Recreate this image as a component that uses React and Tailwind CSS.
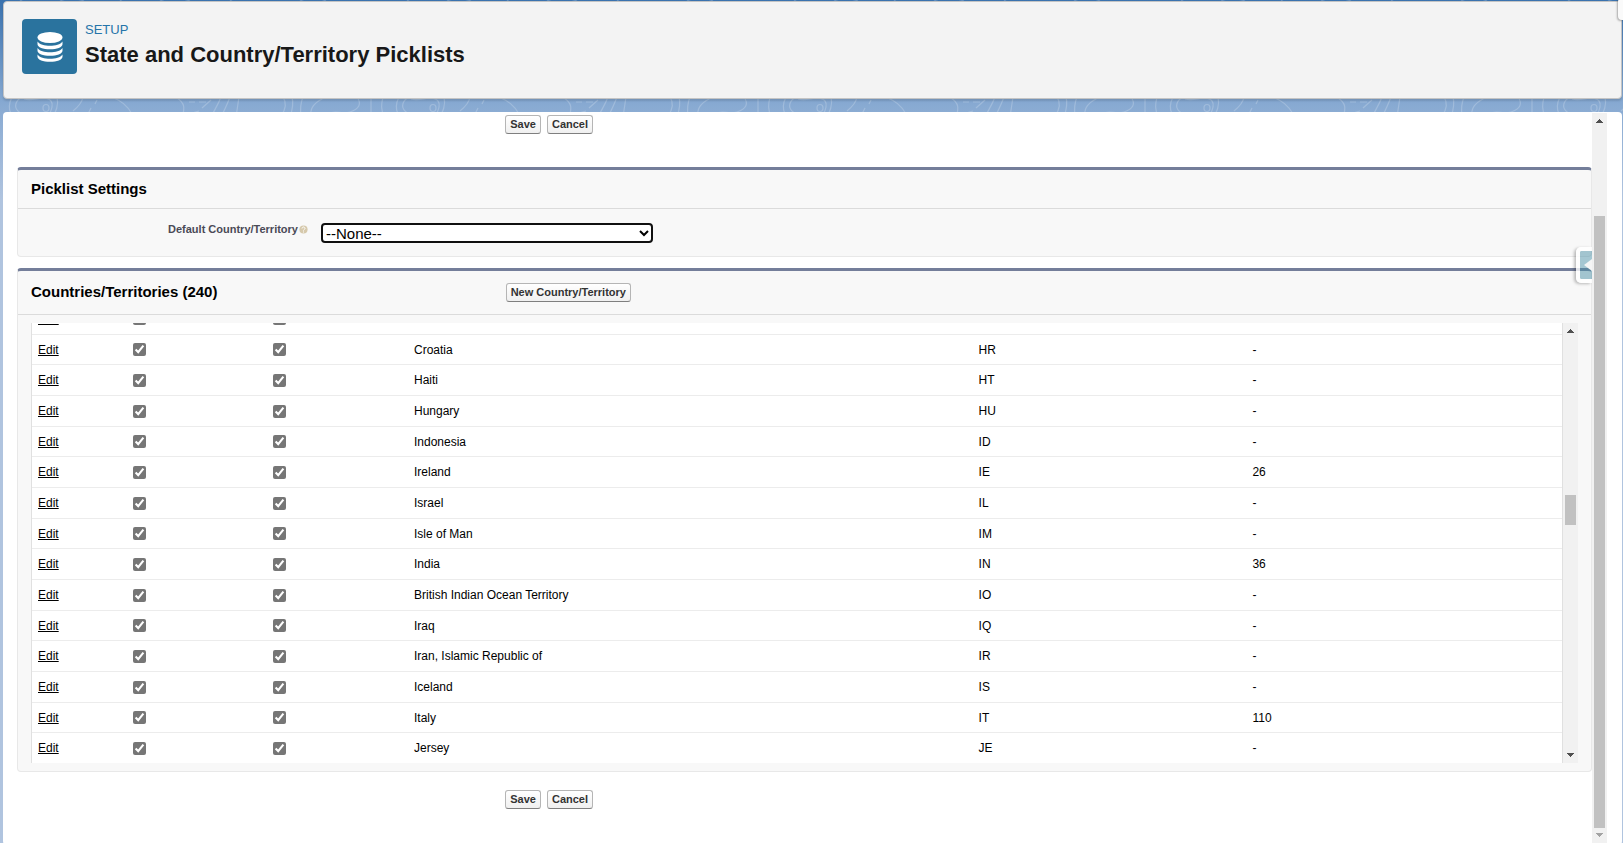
import React, { useState } from "react";

const initialCountries = [
  { name: "Croatia", code: "HR", states: "-" },
  { name: "Haiti", code: "HT", states: "-" },
  { name: "Hungary", code: "HU", states: "-" },
  { name: "Indonesia", code: "ID", states: "-" },
  { name: "Ireland", code: "IE", states: "26" },
  { name: "Israel", code: "IL", states: "-" },
  { name: "Isle of Man", code: "IM", states: "-" },
  { name: "India", code: "IN", states: "36" },
  { name: "British Indian Ocean Territory", code: "IO", states: "-" },
  { name: "Iraq", code: "IQ", states: "-" },
  { name: "Iran, Islamic Republic of", code: "IR", states: "-" },
  { name: "Iceland", code: "IS", states: "-" },
  { name: "Italy", code: "IT", states: "110" },
  { name: "Jersey", code: "JE", states: "-" },
].map((item) => ({ ...item, active: true, visible: true }));

const ClassicButton = ({ children }) => (
  <button
    type="button"
    className="h-[19px] rounded-[3px] border border-[#b5b5b5] border-b-[#7f7f7f] bg-linear-to-b from-white to-[#f0f0f0] px-1 text-[11px] leading-[17px] font-bold whitespace-nowrap text-[#333]"
  >
    {children}
  </button>
);

const SaveBar = () => (
  <div className="flex gap-1.5 pl-[31%]">
    <ClassicButton>Save</ClassicButton>
    <ClassicButton>Cancel</ClassicButton>
  </div>
);

const Arrow = ({ down, light }) => (
  <svg viewBox="0 0 15 15" className="block h-[15px] w-[15px] shrink-0" shapeRendering="crispEdges">
    <path
      d={down ? "M4 5h7v1h-1v1h-1v1h-1v1h-1v-1h-1v-1h-1v-1h-1z" : "M7 6h1v1h1v1h1v1h1v1h-7v-1h1v-1h1v-1h1z"}
      fill={light ? "#a3a3a3" : "#505050"}
    />
  </svg>
);

// topographic lines behind the page
const Background = () => (
  <svg className="absolute inset-0 h-full w-full" aria-hidden="true">
    <defs>
      <pattern id="topo" width="387" height="120" patternUnits="userSpaceOnUse">
        <g fill="none" stroke="#ffffff" strokeOpacity="0.2" strokeWidth="1.2">
          <path d="M12 97c-3 6-4 11-1 17M22 97c-7 4-8 10-4 14 4 3 5 5 5 8M24 99c8 2 13-1 20-1 7 1 9 4 8 9s-3 7-4 12" />
          <ellipse cx="46" cy="108" rx="3" ry="3.500" />
          <path d="M57 97c2 8-1 14-5 22M83 97c-1 6-5 10-10 14M97 100l-2 4M91 108l-3 6" />
          <path d="M112 97c9 4 15 8 20 17M177 98c8 5 8 10 5 20M189 102h6M199 102h7M211 100l-9 8M192 113l7-2" />
          <path d="M221 97c-3 8-6 12-10 20M230 97c-3 8-5 12-9 20M239 97l-3 20M283 97c4 6 3 12-2 19M292 97c2 7 0 14-2 20M303 97c-3 7-3 12-2 20" />
          <path d="M326 97c-9 4-16 9-15 17M357 97c5 7 2 12-7 15s-15-3-21 2M371 97v20M383 97c-2 8-2 12 1 20" />
          <path d="M20 0l5 3M60 0c8 4 16 3 24 0M120 0l4 3M160 0c10 5 22 3 30 0M230 0l6 4M300 0c9 5 18 4 26 0" />
        </g>
      </pattern>
    </defs>
    <rect width="100%" height="120" fill="url(#topo)" />
  </svg>
);

const CountryRow = ({ item, onToggle }) => (
  <tr className="h-[31px] border-b border-[#ececec] [&:nth-child(3n+2)]:h-[30px]">
    <td className="pl-1.5">
      <a href="#edit" className="underline underline-offset-1">Edit</a>
    </td>
    <td className="pl-1.5">
      <input
        type="checkbox"
        aria-label={`${item.name} active`}
        checked={item.active}
        onChange={() => onToggle(item.code, "active")}
        className="block h-[13px] w-[13px] accent-[#767676]"
      />
    </td>
    <td className="pl-1.5">
      <input
        type="checkbox"
        aria-label={`${item.name} visible`}
        checked={item.visible}
        onChange={() => onToggle(item.code, "visible")}
        className="block h-[13px] w-[13px] accent-[#767676]"
      />
    </td>
    <td className="pl-1.5">{item.name}</td>
    <td className="pl-1.5">{item.code}</td>
    <td className="pl-1.5">{item.states}</td>
  </tr>
);

const App = () => {
  const [countries, setCountries] = useState(initialCountries);

  const onToggle = (code, field) => {
    setCountries((prev) =>
      prev.map((item) => (item.code === code ? { ...item, [field]: !item[field] } : item))
    );
  };

  return (
    <div className="relative flex min-h-screen flex-col overflow-hidden bg-[#b0c4df] bg-[linear-gradient(to_bottom,#3a72ae_0px,#88aad2_105px,#b0c4df_200px)] pt-px pr-px pl-[3px] font-['Liberation_Sans',Arial,sans-serif] text-black">
      <Background />

      <header className="relative flex h-[98px] gap-2 rounded-[4px] border border-[#c4c4c4] bg-[#f3f3f3] pt-[17px] pl-[18px] shadow-[0_2px_2px_rgba(0,0,0,0.12)]">
        <div className="flex h-[55px] w-[55px] items-center justify-center rounded-[4px] bg-[#2a739e]">
          <svg viewBox="0 0 26 32" className="h-8 w-[26px]" fill="#fff">
            <ellipse cx="13" cy="6.500" rx="12.500" ry="5.500" />
            <path d="M.5 10.500c2 3 7 4.300 12.500 4.300s10.500-1.300 12.500-4.300v2.800c0 3-5.600 5-12.500 5s-12.500-2-12.500-5z" />
            <path d="M.5 17c2 3 7 4.300 12.500 4.300s10.500-1.300 12.500-4.300v2.800c0 3-5.600 5-12.500 5s-12.500-2-12.500-5z" />
            <path d="M.5 23.500c2 3 7 4.300 12.500 4.300s10.500-1.300 12.500-4.300v2.300c0 3-5.600 5-12.500 5s-12.500-2-12.500-5z" />
          </svg>
        </div>
        <div>
          <p className="pt-[3px] text-[13px] leading-4 text-[#2574a9]">SETUP</p>
          <h1 className="pt-[3px] text-[22px] leading-7 font-bold text-[#181818]">State and Country/Territory Picklists</h1>
        </div>
        <span className="absolute -top-1 -right-0.5 h-[22px] w-[5px] rounded-l-[4px] bg-[#fafafa] shadow-[-1px_1px_2px_rgba(0,0,0,0.3)]" />
      </header>

      <main className="relative mt-[13px] flex flex-1 rounded-[4px] bg-white pt-px pr-[15px]">
        <div className="relative flex min-w-0 flex-1 flex-col pt-0.5 pl-[14px]">
          <SaveBar />

          <section className="mt-[33px] rounded-[4px] border border-t-[3px] border-[#e8e8e8] border-t-[#747e9a] bg-[#f8f8f8]">
            <h2 className="flex h-[39px] items-center border-b border-[#dbdbdb] pl-[13px] text-[15px] font-bold">
              Picklist Settings
            </h2>
            <div className="flex h-[47px] pt-[13px]">
              <div className="flex w-[290px] shrink-0 justify-end gap-px">
                <label htmlFor="default-country" className="text-[11px] leading-[14px] font-bold text-[#4a4a56]">
                  Default Country/Territory
                </label>
                <svg viewBox="0 0 9 9" className="mt-[3px] h-[9px] w-[9px]">
                  <circle cx="4.500" cy="4.500" r="4.100" fill="#d6c9ac" />
                  <path d="M3 3.500c0-2 3-2 3 0 0 1-1.500 1-1.500 2M4.500 6.500v1" fill="none" stroke="#fff" />
                </svg>
              </div>
              <select
                id="default-country"
                className="mt-0.5 ml-3.5 h-[18px] w-[21%] rounded-[3px] bg-white text-[15px] leading-4 outline-2 -outline-offset-1 outline-[#101010]"
              >
                <option>--None--</option>
              </select>
            </div>
          </section>

          <section className="mt-[11px] rounded-[4px] border border-t-[3px] border-[#e8e8e8] border-t-[#747e9a] bg-[#f8f8f8]">
            <div className="flex h-11 items-center border-b border-[#dbdbdb]">
              <h2 className="w-[31%] shrink-0 pl-[13px] text-[15px] font-bold">Countries/Territories (240)</h2>
              <ClassicButton>New Country/Territory</ClassicButton>
            </div>
            <div className="mt-2 mr-[13px] mb-2 ml-[13px] flex h-[440px]">
              <div className="flex min-w-0 flex-1 flex-col justify-end overflow-hidden border-x border-[#e0e0e0] bg-white">
                <table className="-mb-px w-full table-fixed border-collapse text-left text-[12px] leading-4">
                  <colgroup>
                    <col className="w-[95px]" />
                    <col className="w-[140px]" />
                    <col className="w-[141px]" />
                    <col className="w-[36.9%]" />
                    <col className="w-[17.9%]" />
                    <col />
                  </colgroup>
                  <tbody>
                    <CountryRow item={{ name: "", code: "", states: "", active: true, visible: true }} onToggle={onToggle} />
                    {countries.map((item) => (
                      <CountryRow key={item.code} item={item} onToggle={onToggle} />
                    ))}
                  </tbody>
                </table>
              </div>
              <div className="flex w-[15px] shrink-0 flex-col bg-[#f1f1f1]">
                <Arrow />
                <div className="mx-0.5 mt-[157px] h-[30px] bg-[#c1c1c1]" />
                <div className="mt-auto">
                  <Arrow down />
                </div>
              </div>
            </div>
          </section>

          <div className="pt-[18px] pb-9">
            <SaveBar />
          </div>

          {/* collapsed help panel handle */}
          <button
            type="button"
            aria-label="Open sidebar"
            className="absolute top-[134px] right-0 h-9 w-4 rounded-l-[5px] border-4 border-r-0 border-white/80 bg-[#4b8fa6]/50 bg-clip-padding shadow-[-2px_1px_3px_rgba(0,0,0,0.25)]"
          >
            <svg viewBox="0 0 12 28" className="block h-7 w-3">
              <path d="M12 8v12l-8-6z" fill="#f5f5f5" />
            </svg>
          </button>
        </div>

        <div className="mb-px flex w-[15px] shrink-0 flex-col bg-[#f1f1f1] pb-px">
          <Arrow />
          <div className="mx-0.5 mt-[88px] flex-1 bg-[#c1c1c1]" />
          <Arrow down light />
        </div>
      </main>
    </div>
  );
};

export default App;
